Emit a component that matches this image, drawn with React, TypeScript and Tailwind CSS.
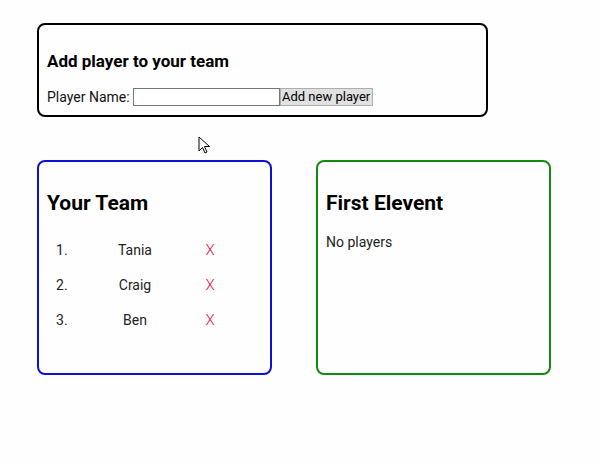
import React from "react";

function Cursor() {
  return (
    <svg className="absolute left-[198px] top-[136px]" width="13" height="18" viewBox="0 0 13 18">
      <path d="M1 1 L1 15 L4.5 11.5 L7 17 L9 16 L6.5 10.5 L11.5 10.5 Z" fill="#fff" stroke="#000" strokeWidth="1" strokeLinejoin="round" />
    </svg>
  );
}

export default function App() {
  const team = ["Tania", "Craig", "Ben"];
  return (
    <div className="relative min-h-[465px] bg-[#fffefe] pl-[37px] pt-[23px] font-['Roboto',sans-serif] text-[#111]">
      <div className="w-[451px] h-[94px] border-2 border-black rounded-lg pl-[8px] pt-[26px]">
        <h3 className="text-[17px] font-bold leading-[20px] text-black">Add player to your team</h3>
        <div className="mt-[17px] flex items-center h-[18px] text-[14px]">
          <span className="leading-[18px]">Player Name:</span>
          <input className="ml-[3px] w-[147px] h-[18px] border border-[#767676] bg-white outline-none" />
          <button className="w-[93px] h-[18px] border border-[#adadad] bg-[#e1e1e1] text-[13px] leading-[16px] text-black">Add new player</button>
        </div>
      </div>
      <div className="mt-[43px] flex gap-[44px]">
        <div className="w-[235px] h-[215px] border-2 border-[#1010d0] rounded-lg pl-[8px] pt-[27px]">
          <h2 className="text-[21px] font-bold leading-[28px] text-black">Your Team</h2>
          <ol className="mt-[16px]">
            {team.map((n, i) => (
              <li key={n} className="flex h-[35px] items-center text-[14px] text-[#222]">
                <span className="ml-[9px] w-[50px]">{i + 1}.</span>
                <span className="w-[58px] text-center">{n}</span>
                <span className="w-[92px] text-center text-[15px] font-light text-[#dc143c]">X</span>
              </li>
            ))}
          </ol>
        </div>
        <div className="w-[235px] h-[215px] border-2 border-[#108a10] rounded-lg pl-[8px] pt-[27px]">
          <h2 className="text-[21px] font-bold leading-[28px] text-black">First Elevent</h2>
          <p className="mt-[15px] text-[14px] leading-[20px] text-[#222]">No players</p>
        </div>
      </div>
      <Cursor />
    </div>
  );
}
